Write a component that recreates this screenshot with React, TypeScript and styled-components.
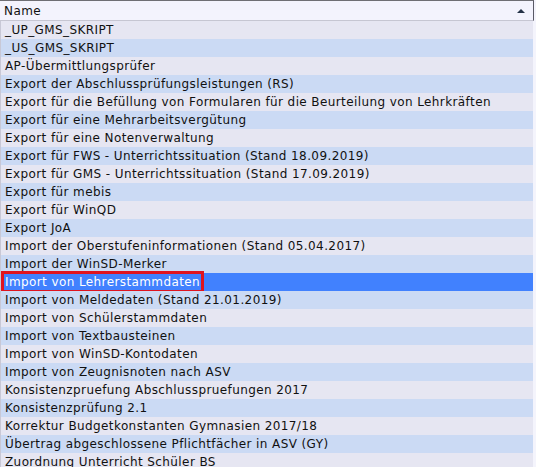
import React from "react";
import styled, {createGlobalStyle} from "styled-components";

const GlobalStyle = createGlobalStyle`
  body {
    margin: 0;
    background: #ffffff;
    font-family: "DejaVu Sans", "Liberation Sans", sans-serif;
  }
`

const Table = styled.div`
  width: 536px;
  height: 467px;
  overflow: hidden;
  display: flex;
  flex-direction: column;
  background: #f4f4fc;
`

const Header = styled.div`
  flex: none;
  height: 19px;
  display: flex;
  align-items: center;
  justify-content: space-between;
  padding: 0 8px 0 4px;
  margin-right: 2px;
  border-top: 1px solid #6e6e74;
  border-bottom: 1px solid #c6c6d2;
  border-right: 1px solid #5a5a66;
  background: #f3f3fd;
  font-size: 12px;
  letter-spacing: 0.4px;
  color: #101010;
`

const SortArrow = styled.span`
  width: 0;
  height: 0;
  border-left: 4px solid transparent;
  border-right: 4px solid transparent;
  border-bottom: 4px solid #243247;
  margin-top: 1px;
`

const List = styled.div`
  flex: none;
  display: flex;
  flex-direction: column;
  margin-right: 3px;
  border-left: 1px solid #c8c8d6;
`

const Row = styled.div<{ $odd: boolean; $selected: boolean }>`
  height: 18px;
  flex: none;
  display: flex;
  align-items: center;
  padding-left: 4px;
  font-size: 12px;
  letter-spacing: 0.4px;
  white-space: nowrap;
  color: ${p => (p.$selected ? "#ffffff" : "#111111")};
  background: ${p => (p.$selected ? "#4181fe" : p.$odd ? "#cbdaf4" : "#e6e6f2")};
`

const Marked = styled.span`
  outline: 3px solid #e0141e;
  outline-offset: 1px;
`

const items = [
    "_UP_GMS_SKRIPT",
    "_US_GMS_SKRIPT",
    "AP-Übermittlungsprüfer",
    "Export der Abschlussprüfungsleistungen (RS)",
    "Export für die Befüllung von Formularen für die Beurteilung von Lehrkräften",
    "Export für eine Mehrarbeitsvergütung",
    "Export für eine Notenverwaltung",
    "Export für FWS - Unterrichtssituation (Stand 18.09.2019)",
    "Export für GMS - Unterrichtssituation (Stand 17.09.2019)",
    "Export für mebis",
    "Export für WinQD",
    "Export JoA",
    "Import der Oberstufeninformationen (Stand 05.04.2017)",
    "Import der WinSD-Merker",
    "Import von Lehrerstammdaten",
    "Import von Meldedaten (Stand 21.01.2019)",
    "Import von Schülerstammdaten",
    "Import von Textbausteinen",
    "Import von WinSD-Kontodaten",
    "Import von Zeugnisnoten nach ASV",
    "Konsistenzpruefung Abschlusspruefungen 2017",
    "Konsistenzprüfung 2.1",
    "Korrektur Budgetkonstanten Gymnasien 2017/18",
    "Übertrag abgeschlossene Pflichtfächer in ASV (GY)",
    "Zuordnung Unterricht Schüler BS",
]

const selectedIndex = 14

export default function App() {
    return (
        <>
            <GlobalStyle/>
            <Table>
                <Header>
                    <span>Name</span>
                    <SortArrow/>
                </Header>
                <List>
                    {items.map((name, i) => (
                        <Row key={i} $odd={i % 2 === 1} $selected={i === selectedIndex}>
                            {i === selectedIndex ? <Marked>{name}</Marked> : name}
                        </Row>
                    ))}
                </List>
            </Table>
        </>
    )
}
